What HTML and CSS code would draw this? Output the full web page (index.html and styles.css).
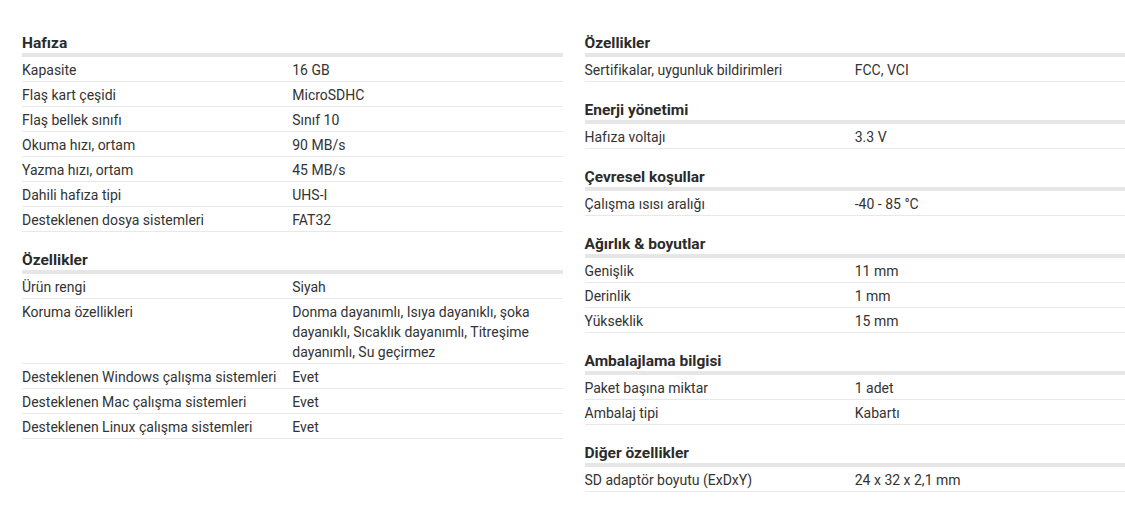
FILE: index.html
```html
<!DOCTYPE html>
<html lang="tr">
<head>
<meta charset="utf-8">
<title>Özellikler</title>
<link rel="stylesheet" href="styles.css">
</head>
<body>
<div class="specs">
  <div class="col">
    <section class="group">
      <h3 class="group-title">Hafıza</h3>
      <div class="row"><div class="label">Kapasite</div><div class="value">16 GB</div></div>
      <div class="row"><div class="label">Flaş kart çeşidi</div><div class="value">MicroSDHC</div></div>
      <div class="row"><div class="label">Flaş bellek sınıfı</div><div class="value">Sınıf 10</div></div>
      <div class="row"><div class="label">Okuma hızı, ortam</div><div class="value">90 MB/s</div></div>
      <div class="row"><div class="label">Yazma hızı, ortam</div><div class="value">45 MB/s</div></div>
      <div class="row"><div class="label">Dahili hafıza tipi</div><div class="value">UHS-I</div></div>
      <div class="row"><div class="label">Desteklenen dosya sistemleri</div><div class="value">FAT32</div></div>
    </section>
    <section class="group">
      <h3 class="group-title">Özellikler</h3>
      <div class="row"><div class="label">Ürün rengi</div><div class="value">Siyah</div></div>
      <div class="row"><div class="label">Koruma özellikleri</div><div class="value">Donma dayanımlı, Isıya dayanıklı, şoka dayanıklı, Sıcaklık dayanımlı, Titreşime dayanımlı, Su geçirmez</div></div>
      <div class="row"><div class="label">Desteklenen Windows çalışma sistemleri</div><div class="value">Evet</div></div>
      <div class="row"><div class="label">Desteklenen Mac çalışma sistemleri</div><div class="value">Evet</div></div>
      <div class="row"><div class="label">Desteklenen Linux çalışma sistemleri</div><div class="value">Evet</div></div>
    </section>
  </div>
  <div class="col">
    <section class="group">
      <h3 class="group-title">Özellikler</h3>
      <div class="row"><div class="label">Sertifikalar, uygunluk bildirimleri</div><div class="value">FCC, VCI</div></div>
    </section>
    <section class="group">
      <h3 class="group-title">Enerji yönetimi</h3>
      <div class="row"><div class="label">Hafıza voltajı</div><div class="value">3.3 V</div></div>
    </section>
    <section class="group">
      <h3 class="group-title">Çevresel koşullar</h3>
      <div class="row"><div class="label">Çalışma ısısı aralığı</div><div class="value">-40 - 85 °C</div></div>
    </section>
    <section class="group">
      <h3 class="group-title">Ağırlık &amp; boyutlar</h3>
      <div class="row"><div class="label">Genişlik</div><div class="value">11 mm</div></div>
      <div class="row"><div class="label">Derinlik</div><div class="value">1 mm</div></div>
      <div class="row"><div class="label">Yükseklik</div><div class="value">15 mm</div></div>
    </section>
    <section class="group">
      <h3 class="group-title">Ambalajlama bilgisi</h3>
      <div class="row"><div class="label">Paket başına miktar</div><div class="value">1 adet</div></div>
      <div class="row"><div class="label">Ambalaj tipi</div><div class="value">Kabartı</div></div>
    </section>
    <section class="group">
      <h3 class="group-title">Diğer özellikler</h3>
      <div class="row"><div class="label">SD adaptör boyutu (ExDxY)</div><div class="value">24 x 32 x 2,1 mm</div></div>
    </section>
  </div>
</div>
</body>
</html>
```
FILE: styles.css
```css
html, body {
  margin: 0;
  padding: 0;
  background: #ffffff;
}
body {
  font-family: Roboto, "Liberation Sans", Arial, sans-serif;
  font-size: 14px;
  line-height: 20px;
  color: #333333;
}
.specs {
  display: grid;
  grid-template-columns: 1fr 1fr;
  column-gap: 22px;
  padding: 33px 0 0 22px;
}
.col {
  display: flex;
  flex-direction: column;
  gap: 18px;
}
.group-title {
  margin: 0;
  padding-top: 1px;
  font-size: 15.5px;
  line-height: 19px;
  font-weight: 700;
  color: #2b2b2b;
  border-bottom: 4px solid #e6e6e6;
}
.row {
  display: grid;
  grid-template-columns: 1fr 1fr;
  padding: 3px 0 1px;
  border-bottom: 1px solid #e8e8e8;
}
.label, .value {
  padding-right: 8px;
}
```
